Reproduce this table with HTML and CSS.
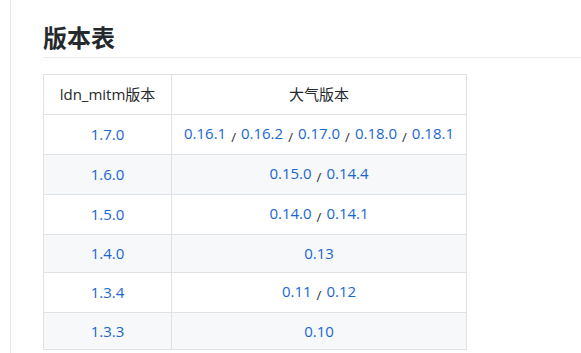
FILE: index.html
```html
<!DOCTYPE html>
<html lang="zh-CN">
<head>
<meta charset="utf-8">
<link rel="stylesheet" href="styles.css">
</head>
<body>
<div class="page">
  <h2 class="title">版本表</h2>
  <table class="versions">
    <thead>
      <tr><th class="c1">ldn_mitm版本</th><th class="c2">大气版本</th></tr>
    </thead>
    <tbody>
      <tr><td><a>1.7.0</a></td><td><a>0.16.1</a><span class="sep">/</span><a>0.16.2</a><span class="sep">/</span><a>0.17.0</a><span class="sep">/</span><a>0.18.0</a><span class="sep">/</span><a>0.18.1</a></td></tr>
      <tr><td><a>1.6.0</a></td><td><a>0.15.0</a><span class="sep">/</span><a>0.14.4</a></td></tr>
      <tr><td><a>1.5.0</a></td><td><a>0.14.0</a><span class="sep">/</span><a>0.14.1</a></td></tr>
      <tr><td><a>1.4.0</a></td><td><a>0.13</a></td></tr>
      <tr><td><a>1.3.4</a></td><td><a>0.11</a><span class="sep">/</span><a>0.12</a></td></tr>
      <tr><td><a>1.3.3</a></td><td><a>0.10</a></td></tr>
    </tbody>
  </table>
</div>
</body>
</html>
```

FILE: styles.css
```css
html, body {
  margin: 0;
  padding: 0;
  background: #ffffff;
}
body {
  font-family: "Open Sans", "Noto Sans CJK SC", sans-serif;
  font-size: 15px;
  color: #24292e;
  overflow: hidden;
}
.page {
  margin-left: 10px;
  border-left: 1px solid #e1e4e8;
  padding-left: 32px;
  padding-top: 22px;
  min-height: 353px;
  box-sizing: border-box;
}
.title {
  margin: 0 0 16px 0;
  font-family: "Noto Sans CJK SC", sans-serif;
  font-size: 24px;
  font-weight: 700;
  line-height: 30px;
  padding-bottom: 5px;
  border-bottom: 1px solid #eaecef;
  color: #24292e;
}
.versions {
  border-collapse: collapse;
  width: 424px;
}
.versions th, .versions td {
  border: 1px solid #dfe2e5;
  text-align: center;
  padding: 8px 6px 7px;
  line-height: 21.5px;
}
.versions th {
  font-weight: 400;
  line-height: 20px;
  padding: 9px 6px 10px;
  color: #24292e;
}
.c1 { width: 115px; }
.versions tbody tr:nth-child(even) {
  background: #f6f8fa;
}
.versions a {
  color: #1a66d2;
  text-decoration: none;
}
.sep {
  display: inline-block;
  margin: 0 5px;
  color: #24292e;
  font-size: 13px;
  vertical-align: -3px;
  line-height: 20px;
}
```
